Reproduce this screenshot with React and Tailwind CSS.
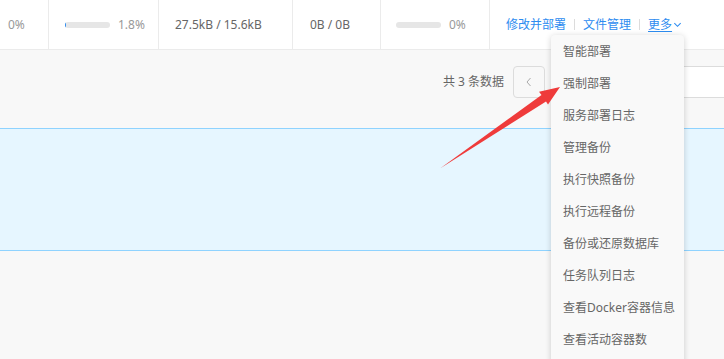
import React from "react";

const font = { fontFamily: '"Noto Sans", "Noto Sans CJK SC", sans-serif' };

function Bar({ fill }) {
  return (
    <div className="relative w-[45px] h-[6px] rounded-full bg-[#e6e6e6] overflow-hidden">
      {fill && <div className="absolute left-0 top-0 h-full w-px bg-[#2d8cf0]" />}
    </div>
  );
}

const items = [
  "智能部署",
  "强制部署",
  "服务部署日志",
  "管理备份",
  "执行快照备份",
  "执行远程备份",
  "备份或还原数据库",
  "任务队列日志",
  "查看Docker容器信息",
  "查看活动容器数",
];

export default function App() {
  return (
    <div
      className="relative w-[724px] h-[359px] overflow-hidden bg-[#f8f8f8] text-[12px]"
      style={font}
    >
      {/* top row */}
      <div className="flex h-[50px] bg-white border-b border-[#ebebeb]">
        <div className="w-[49px] border-r border-[#ebebeb] flex items-center pl-2 text-[#999]">0%</div>
        <div className="w-[110px] border-r border-[#ebebeb] flex items-center pl-4 gap-2 text-[#999]">
          <Bar fill />
          <span>1.8%</span>
        </div>
        <div className="w-[134px] border-r border-[#ebebeb] flex items-center pl-4 text-[#666]">27.5kB / 15.6kB</div>
        <div className="w-[88px] border-r border-[#ebebeb] flex items-center pl-[17px] text-[#666]">0B / 0B</div>
        <div className="w-[109px] border-r border-[#ebebeb] flex items-center pl-[15px] gap-2 text-[#999]">
          <Bar />
          <span>0%</span>
        </div>
        <div className="flex-1 flex items-center pl-4 text-[#2d8cf0] whitespace-nowrap">
          <span>修改并部署</span>
          <span className="w-px h-[11px] bg-[#dcdcdc] mx-2" />
          <span>文件管理</span>
          <span className="w-px h-[11px] bg-[#dcdcdc] mx-2" />
          <span className="underline underline-offset-2">更多</span>
          <svg width="9" height="9" viewBox="0 0 10 10" className="ml-px">
            <path d="M1.5 3.5 L5 7 L8.5 3.5" fill="none" stroke="#2d8cf0" strokeWidth="1.2" />
          </svg>
        </div>
      </div>

      {/* pagination */}
      <div className="flex items-center h-[78px] pt-4 pb-[30px] pl-[443px] text-[#666]">
        <span className="mr-[9px] whitespace-nowrap shrink-0">共 3 条数据</span>
        <div className="w-[32px] h-[32px] shrink-0 rounded border border-[#dcdcdc] bg-[#f8f8f8] flex items-center justify-center">
          <svg width="14" height="14" viewBox="0 0 14 14">
            <path d="M8.5 3 L5 7 L8.5 11" fill="none" stroke="#aaa" strokeWidth="1" />
          </svg>
        </div>
        <div className="ml-2 w-[200px] h-[32px] shrink-0 rounded border border-[#dcdcdc] bg-white" />
      </div>

      {/* selected band */}
      <div className="h-[123px] bg-[#e6f6ff] border-y border-[#8fd3ff]" />

      {/* dropdown */}
      <div className="absolute left-[551px] top-[35px] w-[133px] h-[340px] pt-px rounded bg-[#f9f9f9] shadow-[0_1px_6px_rgba(0,0,0,0.18)] text-[#666]">
        {items.map((t) => (
          <div key={t} className="h-8 leading-8 px-3 whitespace-nowrap">
            {t}
          </div>
        ))}
      </div>

      {/* red arrow */}
      <svg className="absolute left-0 top-0 pointer-events-none" width="724" height="359">
        <polygon
          points="440,168.5 541.5,95 539,91.8 560,87 548,104.5 546,101.5"
          fill="#ef3b3b"
        />
      </svg>
    </div>
  );
}
